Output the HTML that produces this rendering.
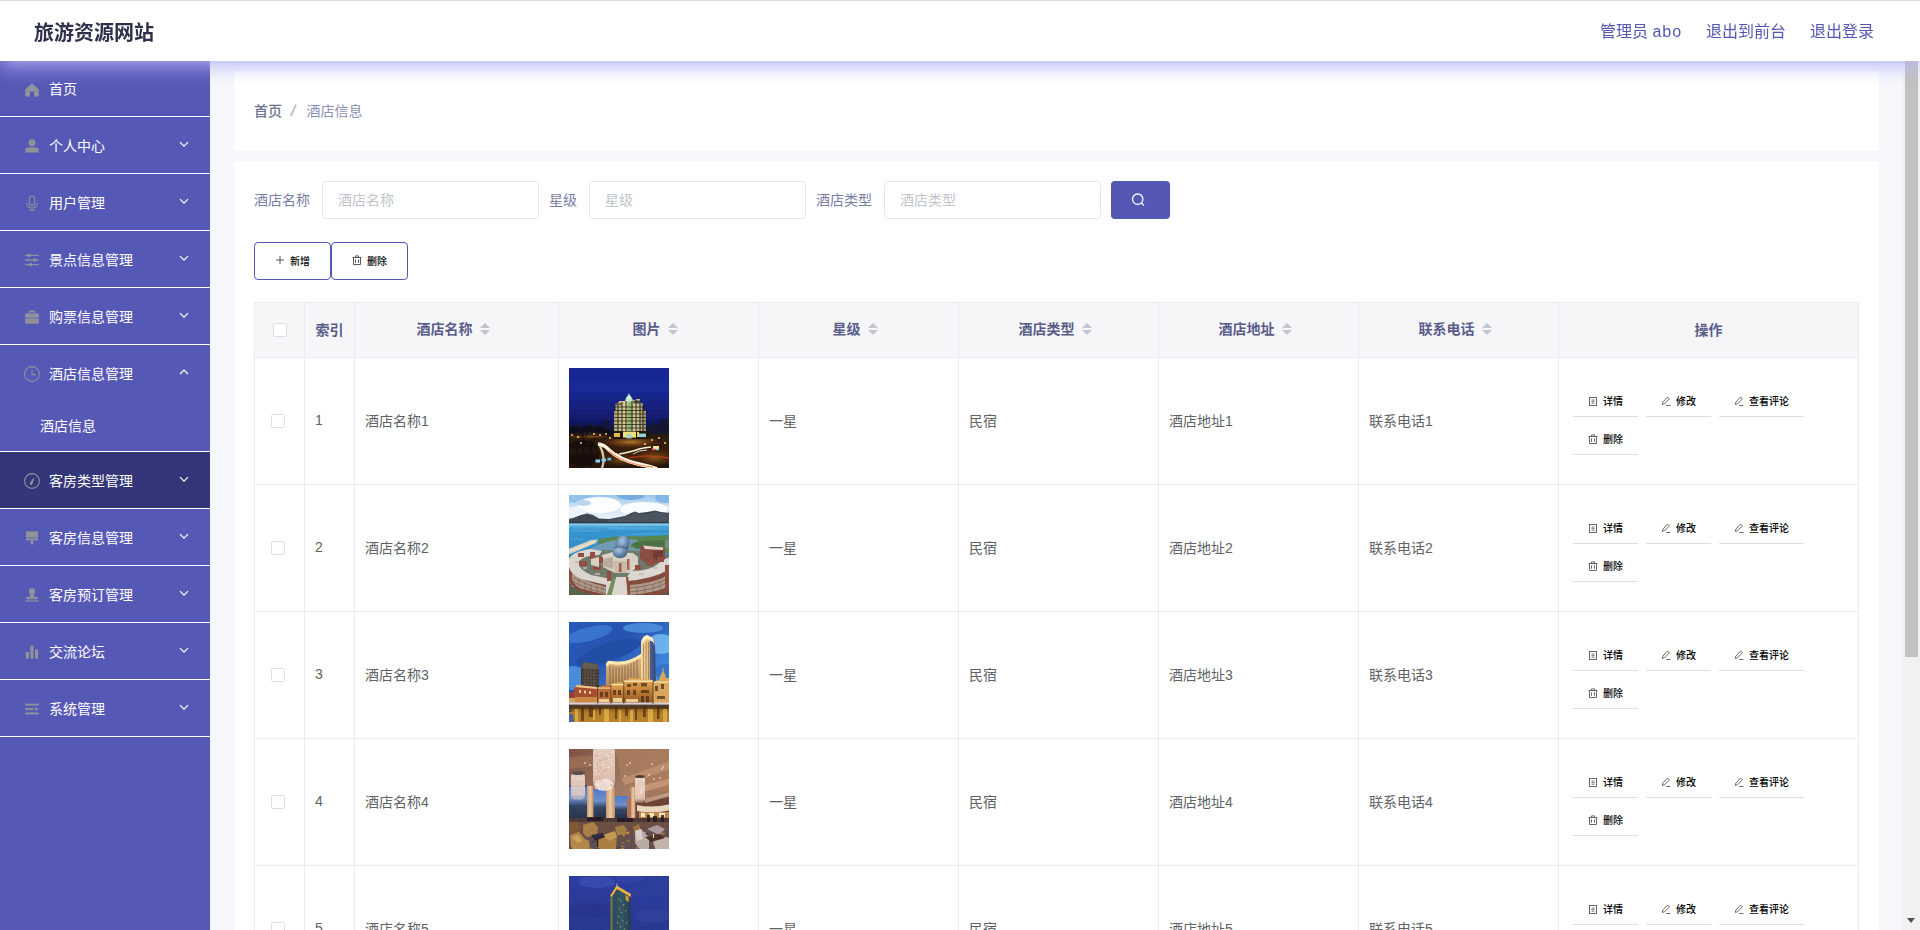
<!DOCTYPE html>
<html lang="zh-CN">
<head>
<meta charset="utf-8">
<title>旅游资源网站</title>
<style>
*{box-sizing:border-box;margin:0;padding:0}
html,body{width:1920px;height:930px;overflow:hidden;background:#f6f7fb;
  font-family:"Liberation Sans","Noto Sans CJK SC",sans-serif;font-size:14px;color:#606266}
ul{list-style:none}
/* ---------- header ---------- */
.navbar{position:fixed;left:0;top:0;width:1920px;height:61px;background:#fff;z-index:30;
  border-top:1px solid #dcdedb;box-shadow:0 4px 20px 0 rgb(181,181,248)}
.navbar .title{position:absolute;left:34px;top:1px;line-height:62px;font-size:20px;font-weight:700;color:#2f3049}
.navbar .right{position:absolute;right:46px;top:0;line-height:62px;font-size:16px;color:#5557b4;white-space:nowrap}
.navbar .right span{margin-left:24px}
.navbar .right em{font-style:normal;letter-spacing:.9px}
/* ---------- scrollbar ---------- */
.sbar{position:fixed;right:0;top:61px;width:17px;height:869px;background:#f1f1f1;z-index:10}
.sbar .thumb{position:absolute;left:2px;top:0;width:13px;height:596px;background:#c1c1c1}
.sbar .arrow{position:absolute;left:4px;bottom:7px;width:0;height:0;border:4.5px solid transparent;border-top:5px solid #505050;border-bottom:0}
/* ---------- sidebar ---------- */
.sidebar{position:fixed;left:0;top:61px;width:210px;height:869px;background:#5658b6;z-index:20;color:#fff}
.menu>li{border-bottom:1px solid #fff}
.menu .item{position:relative;height:56px;line-height:58px;padding-left:49px;font-size:14px;color:#fff;white-space:nowrap}
.menu>li:first-child .item{height:55px;line-height:57px}
.menu .item svg.ic{position:absolute;left:23px;top:50%;margin-top:-8px;width:18px;height:18px;fill:#909399}
.menu .item svg.arr{position:absolute;left:178px;top:50%;margin-top:-7px;width:12px;height:12px;fill:none;stroke:#fff;stroke-width:1.2}
.menu .sub{height:50px;line-height:50px;padding-left:40px;font-size:14px;color:#fff}
.menu li.hover{background:#333678}
/* ---------- main ---------- */
.main{position:absolute;left:210px;top:61px;width:1693px;height:869px;background:#f6f7fb;overflow:hidden}
.card{position:absolute;left:24px;width:1645px;background:#fff}
.crumb{top:10px;height:80px;padding:0 20px;line-height:79px;font-size:14px}
.crumb b{font-weight:500;color:#6b7190}
.crumb i{font-style:normal;display:inline-block;color:#b9bfd2;margin:0 11px 0 9px;font-weight:700;font-size:16px;transform:skewX(-13deg);position:relative;top:-.5px}
.crumb span{color:#8d90b3}
.body{top:100px;height:900px;padding:20px 20px 0}
/* filter */
.filter{height:38px;display:flex;align-items:center;white-space:nowrap}
.filter label{color:#7a7da6;font-size:14px;margin-right:12px;position:relative;top:-1px}
.filter .inp{width:217px;height:38px;border:1px solid #e4e4fc;border-radius:4px;margin-right:10px;
  padding-left:15px;line-height:36px;color:#c0c4cc;font-size:14px;background:#fff}
.filter .search{width:59px;height:38px;border-radius:4px;background:#5557b4;position:relative}
.filter .search svg{position:absolute;left:20px;top:12px;width:14px;height:14px;fill:none;stroke:#fff;stroke-width:1.3}
/* buttons */
.ops{margin-top:23px;height:38px;display:flex}
.btn{height:38px;width:76.8px;padding-bottom:2px;border:1px solid #5557b4;border-radius:4px;background:#fff;margin-right:.4px;
  display:flex;align-items:center;justify-content:center;font-size:10px;color:#000;font-weight:500}
.btn svg{width:10px;height:10px;margin-right:5px;fill:none;stroke:#4a4644;stroke-width:.9}
/* table */
table{border-collapse:separate;border-spacing:0;margin-top:22px;width:1604px;table-layout:fixed;
  border-top:1px solid #e9eaf5;border-left:1px solid #e9eaf5;font-size:14px}
th,td{border-right:1px solid #e9eaf5;border-bottom:1px solid #e9eaf5;padding:0 10px;text-align:left;vertical-align:middle;overflow:hidden}
th{height:55px;background:#f6f6f9;color:#595c89;font-weight:700;text-align:center;white-space:nowrap}
td{height:127px;color:#606266}
td.t{padding-bottom:2px}
th.s{padding-bottom:4px}
th.n{padding-bottom:2px}
.ck{display:block;width:14px;height:14px;border:1px solid #dcdfe6;border-radius:2px;background:#fff}
th .ck{margin-left:8px}
td .ck{margin-left:6px}
.caret{display:inline-block;position:relative;width:24px;height:14px;vertical-align:middle;margin-top:-2px}
.caret:before,.caret:after{content:"";position:absolute;left:7px;border:5px solid transparent}
.caret:before{top:-4px;border-bottom-color:#c0c4cc}
.caret:after{top:8px;border-top-color:#c0c4cc}
.pic{display:block;width:100px;height:100px;position:relative;top:-3px}
.acts{display:flex;flex-wrap:wrap;padding-left:4px;width:260px}
.act{height:32px;margin:2px 8px 4px 0;padding:0 15px;border-bottom:1px solid #dcdfea;display:flex;align-items:center;
  font-size:10px;color:#000;font-weight:500;white-space:nowrap}
.act svg{width:10px;height:10px;margin-right:5px;fill:none;stroke:#5a5552;stroke-width:.9;position:relative;top:.5px}
</style>
</head>
<body>
<header class="navbar">
  <div class="title">旅游资源网站</div>
  <div class="right"><span>管理员 <em>abo</em></span><span>退出到前台</span><span>退出登录</span></div>
</header>
<aside class="sidebar">
  <ul class="menu">
    <li><div class="item"><svg class="ic" viewBox="0 0 18 18"><path d="M9 2.2 L15.8 8.6 V15.6 H11 V10.8 H7 V15.6 H2.2 V8.6 Z"/></svg>首页</div></li>
    <li><div class="item"><svg class="ic" viewBox="0 0 18 18"><circle cx="9" cy="5.8" r="3.5"/><path d="M2.2 15.6 V13.4 Q2.2 10.6 5.6 10.6 H12.4 Q15.8 10.6 15.8 13.4 V15.6 Z"/></svg>个人中心<svg class="arr" viewBox="0 0 12 12"><path d="M2 4.2 L6 8.2 L10 4.2"/></svg></div></li>
    <li><div class="item"><svg class="ic" viewBox="0 0 18 18"><g fill="none" stroke="#909399" stroke-width="1.1"><rect x="6.4" y="2" width="5.2" height="9.4" rx="2.6"/><path d="M3.9 8.4 V9 a5.1 5.1 0 0 0 10.2 0 V8.4"/><path d="M9 14.2 V16.2 M6.3 16.2 H11.7"/></g></svg>用户管理<svg class="arr" viewBox="0 0 12 12"><path d="M2 4.2 L6 8.2 L10 4.2"/></svg></div></li>
    <li><div class="item"><svg class="ic" viewBox="0 0 18 18"><g fill="none" stroke="#909399" stroke-width="1.3"><path d="M2.2 4.4 H15.8 M2.2 9 H15.8 M2.2 13.6 H15.8"/></g><circle cx="6" cy="4.4" r="1.7"/><circle cx="11.6" cy="9" r="1.7"/><circle cx="7.6" cy="13.6" r="1.7"/></svg>景点信息管理<svg class="arr" viewBox="0 0 12 12"><path d="M2 4.2 L6 8.2 L10 4.2"/></svg></div></li>
    <li><div class="item"><svg class="ic" viewBox="0 0 18 18"><path d="M6 5.4 V2.6 H12 V5.4 H10.6 V4 H7.4 V5.4 Z"/><rect x="2.2" y="5.4" width="13.6" height="4.2"/><rect x="2.2" y="10.4" width="13.6" height="5.2"/></svg>购票信息管理<svg class="arr" viewBox="0 0 12 12"><path d="M2 4.2 L6 8.2 L10 4.2"/></svg></div></li>
    <li><div class="item"><svg class="ic" viewBox="0 0 18 18"><g fill="none" stroke="#909399" stroke-width="1.1"><circle cx="9" cy="9" r="7.4"/><path d="M9 4.8 V9.6 H12.8"/></g></svg>酒店信息管理<svg class="arr" viewBox="0 0 12 12"><path d="M2 8 L6 4 L10 8"/></svg></div><div class="sub">酒店信息</div></li>
    <li class="hover"><div class="item"><svg class="ic" viewBox="0 0 18 18"><circle cx="9" cy="9" r="7.4" fill="none" stroke="#909399" stroke-width="1.1"/><path d="M6.9 12.2 Q6.4 10.6 11.4 4.9 Q9.9 12.2 8.6 12.9 Q7.3 13.3 6.9 12.2 Z"/></svg>客房类型管理<svg class="arr" viewBox="0 0 12 12"><path d="M2 4.2 L6 8.2 L10 4.2"/></svg></div></li>
    <li><div class="item"><svg class="ic" viewBox="0 0 18 18"><rect x="3" y="2.4" width="12" height="6.2"/><rect x="3" y="9.4" width="12" height="1.9"/><path d="M7.7 11.3 H10.3 V14.8 Q9 16.6 7.7 14.8 Z"/></svg>客房信息管理<svg class="arr" viewBox="0 0 12 12"><path d="M2 4.2 L6 8.2 L10 4.2"/></svg></div></li>
    <li><div class="item"><svg class="ic" viewBox="0 0 18 18"><circle cx="9" cy="5.4" r="3.1"/><path d="M7.5 7.6 H10.5 L11.2 10.8 H14.6 V13.2 H3.4 V10.8 H6.8 Z"/><rect x="2.2" y="14.4" width="13.6" height="1.2"/></svg>客房预订管理<svg class="arr" viewBox="0 0 12 12"><path d="M2 4.2 L6 8.2 L10 4.2"/></svg></div></li>
    <li><div class="item"><svg class="ic" viewBox="0 0 18 18"><rect x="2.8" y="9" width="3.1" height="6.6"/><rect x="7.4" y="2.6" width="3.1" height="13"/><rect x="12" y="6.4" width="3.1" height="9.2"/></svg>交流论坛<svg class="arr" viewBox="0 0 12 12"><path d="M2 4.2 L6 8.2 L10 4.2"/></svg></div></li>
    <li><div class="item"><svg class="ic" viewBox="0 0 18 18"><rect x="2.2" y="3.6" width="13.6" height="1.9"/><rect x="2.2" y="8.05" width="8.6" height="1.9"/><rect x="2.2" y="12.5" width="13.6" height="1.9"/><path d="M12.2 6.7 L15.8 9 L12.2 11.3 Z"/></svg>系统管理<svg class="arr" viewBox="0 0 12 12"><path d="M2 4.2 L6 8.2 L10 4.2"/></svg></div></li>
  </ul>
</aside>
<main class="main">
  <section class="card crumb"><b>首页</b><i>/</i><span>酒店信息</span></section>
  <section class="card body">
    <div class="filter"><label>酒店名称</label><div class="inp">酒店名称</div><label>星级</label><div class="inp">星级</div><label>酒店类型</label><div class="inp">酒店类型</div><div class="search"><svg viewBox="0 0 14 14"><circle cx="6.7" cy="6.2" r="5.2"/><path d="M10.5 10 L13 12.6"/></svg></div></div>
    <div class="ops"><div class="btn"><svg viewBox="0 0 10 10"><path d="M5 1 V9 M1 5 H9"/></svg>新增</div><div class="btn"><svg viewBox="0 0 10 10"><path d="M0.6 2.5 H9.4 M3.5 2.5 V0.9 H6.5 V2.5 M1.5 2.5 V9.5 H8.5 V2.5"/><path d="M3.5 4.4 V7.8 M6.5 4.4 V7.8" stroke-width=".9"/></svg>删除</div></div>
    <table>
      <colgroup><col style="width:50px"><col style="width:50px"><col style="width:204px"><col style="width:200px"><col style="width:200px"><col style="width:200px"><col style="width:200px"><col style="width:200px"><col style="width:300px"></colgroup>
      <tr><th><span class="ck"></span></th><th class="n">索引</th><th class="s">酒店名称<span class="caret"></span></th><th class="s">图片<span class="caret"></span></th><th class="s">星级<span class="caret"></span></th><th class="s">酒店类型<span class="caret"></span></th><th class="s">酒店地址<span class="caret"></span></th><th class="s">联系电话<span class="caret"></span></th><th class="n">操作</th></tr>
      <tr><td><span class="ck"></span></td><td class="t">1</td><td class="t">酒店名称1</td><td><svg class="pic" viewBox="0 0 100 100"><defs><filter id="bl1" x="-10%" y="-10%" width="120%" height="120%"><feGaussianBlur stdDeviation="0.5"/></filter><linearGradient id="p1s" x1="0" y1="0" x2="0" y2="1"><stop offset="0" stop-color="#15228f"/><stop offset=".35" stop-color="#1a2b98"/><stop offset=".75" stop-color="#121b6e"/><stop offset="1" stop-color="#0b1040"/></linearGradient><linearGradient id="p1g" x1="0" y1="0" x2="0" y2="1"><stop offset="0" stop-color="#241810"/><stop offset=".5" stop-color="#3a200a"/><stop offset="1" stop-color="#160e08"/></linearGradient><radialGradient id="p1o" cx=".5" cy=".5" r=".5"><stop offset="0" stop-color="#ffb040" stop-opacity=".9"/><stop offset="1" stop-color="#c05010" stop-opacity="0"/></radialGradient><linearGradient id="p1b" x1="0" y1="0" x2="1" y2="0"><stop offset="0" stop-color="#b0a478"/><stop offset=".35" stop-color="#e0d29c"/><stop offset=".5" stop-color="#86b468"/><stop offset=".65" stop-color="#dccf9a"/><stop offset="1" stop-color="#9c9268"/></linearGradient></defs><g filter="url(#bl1)"><rect x="-6" y="-6" width="112" height="74" fill="url(#p1s)"/><rect x="-6" y="62" width="112" height="44" fill="url(#p1g)"/><path d="M-6 64 V58 H4 L8 55 L12 58 H18 L21 53 L24 58 H26 V56 H31 V60 H34 V54 L37 51 L40 54 V57 H44 V66 H-6 Z" fill="#161738"/><path d="M78 66 V58 H83 V55 H89 V57 H92 V51 H101 V66 Z" fill="#14152f"/><ellipse cx="20" cy="67" rx="26" ry="4" fill="url(#p1o)" opacity=".8"/><ellipse cx="62" cy="74" rx="30" ry="6" fill="url(#p1o)" opacity=".7"/><ellipse cx="85" cy="90" rx="22" ry="9" fill="url(#p1o)" opacity=".45"/><ellipse cx="52" cy="92" rx="20" ry="7" fill="url(#p1o)" opacity=".35"/><path d="M45 63 V44 L46.5 42 V36 L50 34 V33 H56 L57 30 Q60 24 63 30 L64 32 H66 L68 31 H71 V34 L74 36 V42 L77 43 V63 Z" fill="url(#p1b)"/><path d="M57.3 30 Q60 24.5 62.7 30 V33.5 H57.3 Z" fill="#bfeedd"/><rect x="59.6" y="25.5" width=".9" height="3" fill="#e8fff4"/><g stroke="#2e2a1c" stroke-width="1.15" opacity=".8"><path d="M45 39 H77 M45 42.5 H77 M45 46 H77 M45 49.5 H77 M45 53 H77 M45 56.5 H77 M45 60 H77"/></g><g stroke="#24221a" stroke-width="1.2" opacity=".8"><path d="M49 36 V63 M53 34 V63 M57 33 V63 M63 33 V63 M67 32 V63 M71 34 V63 M74 37 V63"/></g><rect x="64.5" y="32.5" width="7" height="3" fill="#2a2a30" opacity=".8"/><rect x="47" y="35" width="6" height="2.2" fill="#3a3828" opacity=".6"/><rect x="44" y="63" width="36" height="8" fill="#1c140c"/><rect x="54" y="63.6" width="13" height="6" fill="#f3e07a"/><rect x="57.5" y="66" width="5" height="4.5" fill="#9fd8c8"/><rect x="45" y="65" width="6" height="4" fill="#e8b850"/><rect x="70" y="65.5" width="7" height="3.6" fill="#8fd0d8"/><rect x="68" y="64" width="2" height="5" fill="#f0d060"/><path d="M14 98 V62 M16 74 L11 64 M16 70 L21 60 M22 100 V72 M22 80 L26 70 M8 100 V78" stroke="#120c0a" stroke-width="1.1" fill="none" opacity=".85"/><ellipse cx="13" cy="85" rx="18" ry="13" fill="#0c0808" opacity=".55"/><path d="M-6 62 Q6 56 12 60 Q18 54 24 60 Q30 56 36 61 L44 63 V68 H-6 Z" fill="#0e0c14" opacity=".7"/><circle cx="3" cy="67" r="1" fill="#ffd070"/><circle cx="9" cy="69" r="1" fill="#ffd070"/><circle cx="25" cy="66" r="1" fill="#ffd070"/><circle cx="31" cy="67" r="1" fill="#ffd070"/><circle cx="37" cy="66" r="1" fill="#ffd070"/><circle cx="41" cy="70" r="1" fill="#ffd070"/><circle cx="83" cy="72" r="1" fill="#ffd070"/><circle cx="90" cy="70" r="1" fill="#ffd070"/><circle cx="96" cy="75" r="1" fill="#ffd070"/><circle cx="76" cy="76" r="1" fill="#ffd070"/><circle cx="12" cy="75" r="1" fill="#ffd070"/><path d="M29 76 Q36 77 40 82 Q50 92 70 96 Q80 98 88 101" stroke="#fff6e0" stroke-width="3.6" fill="none"/><path d="M46 86 Q58 95 78 98" stroke="#ffffff" stroke-width="3" fill="none" opacity=".9"/><path d="M31 78 Q37 90 33 100" stroke="#ffe8c0" stroke-width="2.2" fill="none" opacity=".85"/><path d="M50 86 Q62 84 70 81 Q76 79.5 82 79" stroke="#fff0d0" stroke-width="1.6" fill="none"/><path d="M64 86 Q70 82 78 82" stroke="#ffffff" stroke-width="1" fill="none" opacity=".8"/><path d="M40 83 Q54 96 84 99" stroke="#ff7030" stroke-width="1.4" fill="none" opacity=".7"/><path d="M60 90 Q76 86 100 90" stroke="#e04020" stroke-width="1.6" fill="none" opacity=".6"/><rect x="26.5" y="91.5" width="4.5" height="3" fill="#8fd6ff"/><rect x="32.5" y="90.5" width="4.5" height="3" fill="#7fd0ff"/><rect x="38.5" y="89.8" width="3.5" height="2.6" fill="#6fb8f0"/><rect x="84" y="78" width="6" height="3.4" fill="#ffe0a0"/><rect x="83" y="80.5" width="3" height="1.6" fill="#ff60a0"/><rect x="87" y="80.8" width="3" height="1.4" fill="#60e0d0"/></g></svg></td><td class="t">一星</td><td class="t">民宿</td><td class="t">酒店地址1</td><td class="t">联系电话1</td><td><div class="acts"><span class="act"><svg viewBox="0 0 10 10"><rect x="1.5" y="1.5" width="7" height="8"/><path d="M3.5 4 H6.5 M3.5 5.6 H6.5 M3.5 7.2 H6.5" stroke-width=".8"/></svg>详情</span><span class="act"><svg viewBox="0 0 10 10"><path d="M6.6 1 L8.4 2.8 L3.4 7.9 L1.3 8.4 L1.8 6.2 Z M5.2 9.5 H9.4"/></svg>修改</span><span class="act"><svg viewBox="0 0 10 10"><path d="M6.6 1 L8.4 2.8 L3.4 7.9 L1.3 8.4 L1.8 6.2 Z M5.2 9.5 H9.4"/></svg>查看评论</span><span class="act"><svg viewBox="0 0 10 10"><path d="M0.6 2.5 H9.4 M3.5 2.5 V0.9 H6.5 V2.5 M1.5 2.5 V9.5 H8.5 V2.5"/><path d="M3.5 4.4 V7.8 M6.5 4.4 V7.8" stroke-width=".9"/></svg>删除</span></div></td></tr>
      <tr><td><span class="ck"></span></td><td class="t">2</td><td class="t">酒店名称2</td><td><svg class="pic" viewBox="0 0 100 100"><defs><filter id="bl2" x="-10%" y="-10%" width="120%" height="120%"><feGaussianBlur stdDeviation="0.5"/></filter><filter id="gr2" x="0" y="0" width="100%" height="100%"><feTurbulence type="fractalNoise" baseFrequency=".55" numOctaves="3" seed="5"/><feColorMatrix type="matrix" values="0 0 0 0 .95  0 0 0 0 .95  0 0 0 0 .95  .9 .9 .9 0 -.95"/></filter><filter id="gd2" x="0" y="0" width="100%" height="100%"><feTurbulence type="fractalNoise" baseFrequency=".45" numOctaves="3" seed="13"/><feColorMatrix type="matrix" values="0 0 0 0 0  0 0 0 0 0  0 0 0 0 0  -.9 -.9 -.9 0 1.05"/></filter><linearGradient id="p2s" x1="0" y1="0" x2="0" y2="1"><stop offset="0" stop-color="#7fb6e6"/><stop offset=".5" stop-color="#cfe3f4"/><stop offset="1" stop-color="#f4f8fb"/></linearGradient><linearGradient id="p2w" x1="0" y1="0" x2="0" y2="1"><stop offset="0" stop-color="#58b4e0"/><stop offset=".25" stop-color="#2f93d0"/><stop offset="1" stop-color="#2a84c4"/></linearGradient><radialGradient id="p2d" cx=".4" cy=".35" r=".7"><stop offset="0" stop-color="#a9c4e0"/><stop offset=".6" stop-color="#5d7fa8"/><stop offset="1" stop-color="#3a5578"/></radialGradient></defs><g filter="url(#bl2)"><rect x="-6" y="-6" width="112" height="36" fill="url(#p2s)"/><ellipse cx="8" cy="2" rx="16" ry="6" fill="#8ec0ea"/><ellipse cx="62" cy="0" rx="14" ry="5" fill="#6fa9e2"/><ellipse cx="96" cy="3" rx="10" ry="5" fill="#7db4e6"/><ellipse cx="30" cy="10" rx="22" ry="8" fill="#ffffff" opacity=".95"/><ellipse cx="75" cy="14" rx="24" ry="7" fill="#ffffff" opacity=".9"/><ellipse cx="5" cy="17" rx="12" ry="5" fill="#eef4fa"/><ellipse cx="14" cy="8" rx="8" ry="3" fill="#b8d6f0"/><path d="M-6 25 L4 23 L12 20 L18 18.5 L24 20 L30 23.5 L40 24 L48 22.5 L56 21 L62 18 L66 16.5 L70 18 L78 17 L86 15.5 L92 17 L101 18 V30 H-6 Z" fill="#38424e"/><path d="M40 25 L56 22 L66 18 L78 19 L90 17 L101 20 V28 H40 Z" fill="#4a5560" opacity=".7"/><rect x="-6" y="27" width="112" height="1.6" fill="#2b3238"/><rect x="-6" y="28.5" width="112" height="34" fill="url(#p2w)"/><rect x="-6" y="28.5" width="112" height="2" fill="#8fd0ee" opacity=".7"/><path d="M30 44 Q50 40 72 41.5 L101 40 V58 H28 Z" fill="#55824a"/><path d="M62 48 Q80 44 101 46 V52 Q80 52 66 53 Z" fill="#456e3c"/><path d="M20 54 Q34 46 52 44.5 Q66 43.5 70 45.5 Q62 48 61 52 Q70 55 80 56 L80 62 H20 Z" fill="#6a98b4"/><path d="M-6 56 L22 45 L29 44.5 L27 48 L-6 62 Z" fill="#d9cdb6"/><path d="M-6 58.5 L26 46.5" stroke="#f1eadb" stroke-width="1" fill="none"/><path d="M-6 64 Q20 54 50 55 Q80 55 106 62 V106 H-6 Z" fill="#6b7566"/><path d="M-6 84 Q10 96 40 100 V106 H-6 Z" fill="#4f5f44"/><path d="M106 84 Q90 96 60 100 V106 H106 Z" fill="#56683f"/><path d="M71 52 L76 50 L96 53 L96 66 L80 70 L71 64 Z" fill="#85463a"/><path d="M74 50.5 L94 52.5 L94 55 L76 54 Z" fill="#dcd2c8"/><rect x="84" y="56" width="10" height="8" fill="#6a352c"/><rect x="96" y="45" width="8" height="8" fill="#8c8c8c" opacity=".8"/><path d="M33 60 L44 57 L64 58 L69 62 L69 72 L60 78 L46 78 L34 72 Z" fill="#d7cfc4"/><path d="M34 64 L44 62 V74 L34 71 Z" fill="#b8a898"/><path d="M44 66 H58 V78 H46 Z" fill="#c9b8a6"/><rect x="50" y="68" width="2.5" height="9" fill="#a0523c"/><rect x="58" y="64" width="2.5" height="11" fill="#a8604a"/><ellipse cx="53.5" cy="49" rx="7" ry="9" fill="url(#p2d)" transform="rotate(18 53.5 49)"/><ellipse cx="51" cy="57" rx="7.5" ry="6.2" fill="url(#p2d)"/><path d="M45 53 Q52 50 59 54" stroke="#2f4666" stroke-width="1" fill="none" opacity=".7"/><path d="M0 64 Q4 56 22 54 L33 56 L30 60 Q16 60 10 66 Q8 74 22 80 L42 84 L42 90 L37 103 L4 92 L-2 82 Z" fill="#d9d4cd"/><path d="M0 72 Q2 80 12 84 L37 90 V103 L10 96 Q0 90 -2 80 Z" fill="#7f4436"/><path d="M3 78 Q8 84 37 92 V100 L10 93 Q4 88 3 84 Z" fill="#b5ab9a" opacity=".8"/><g fill="#8d4a3a"><rect x="9" y="58" width="6" height="4"/><rect x="21" y="57" width="5" height="7"/><rect x="10" y="66" width="8" height="5"/><rect x="24" y="70" width="8" height="5"/><rect x="38" y="76" width="4" height="10"/><rect x="30" y="62" width="4" height="6"/></g><path d="M22 64 L30 62 V72 L22 70 Z" fill="#d8cec0"/><path d="M58 82 L62 76 Q84 76 92 66 L101 62 V96 L60 104 Z" fill="#dbd6cf"/><path d="M58 86 Q84 84 101 74 V98 L60 106 Z" fill="#7f4436"/><path d="M61 90 Q86 88 99 80 V92 Q84 98 61 100 Z" fill="#b5ab9a" opacity=".8"/><g fill="#8d4a3a"><rect x="66" y="70" width="6" height="5"/><rect x="78" y="66" width="7" height="5"/><rect x="89" y="62" width="6" height="5"/><rect x="56" y="82" width="3.5" height="18"/><rect x="96" y="70" width="4" height="24"/></g><path d="M47 82 L57 82 L59 106 H41 Z" fill="#d9d4cc"/><path d="M43 84 L47 82 L41 106 H36 Z" fill="#6f8a54"/><g stroke="#6a3a30" stroke-width=".7" opacity=".75" fill="none"><path d="M4 82 Q9 87 37 95 M4 86 Q9 91 37 99"/><path d="M61 93 Q86 91 99 83 M61 97 Q86 95 99 87"/></g><g stroke="#5a3028" stroke-width=".6" opacity=".6"><path d="M10 84 V94 M16 87 V97 M22 89 V99 M28 91 V101 M33 92 V102 M68 92 V100 M76 91 V99 M84 89 V97 M91 86 V94"/></g><g fill="#bfb6aa" opacity=".8"><rect x="6" y="66" width="3" height="2"/><rect x="14" y="72" width="4" height="2"/><rect x="26" y="78" width="5" height="2"/><rect x="70" y="78" width="5" height="2"/><rect x="84" y="72" width="4" height="2"/></g><path d="M-6 96 Q10 104 30 106 H-6 Z" fill="#3c4a34"/><path d="M106 94 Q92 102 70 106 H106 Z" fill="#465a38"/><g stroke="#2a6fae" stroke-width=".6" opacity=".45"><path d="M-4 34 H40 M10 38 H70 M-4 42 H26 M30 36 H100 M50 32 H104 M-4 47 H18"/></g><g stroke="#8fd2f0" stroke-width=".5" opacity=".5"><path d="M4 36 H30 M40 33 H90 M-4 44 H14 M60 39 H100"/></g></g><rect width="100" height="100" filter="url(#gr2)" opacity="0.09"/><rect width="100" height="100" filter="url(#gd2)" opacity="0.09"/></svg></td><td class="t">一星</td><td class="t">民宿</td><td class="t">酒店地址2</td><td class="t">联系电话2</td><td><div class="acts"><span class="act"><svg viewBox="0 0 10 10"><rect x="1.5" y="1.5" width="7" height="8"/><path d="M3.5 4 H6.5 M3.5 5.6 H6.5 M3.5 7.2 H6.5" stroke-width=".8"/></svg>详情</span><span class="act"><svg viewBox="0 0 10 10"><path d="M6.6 1 L8.4 2.8 L3.4 7.9 L1.3 8.4 L1.8 6.2 Z M5.2 9.5 H9.4"/></svg>修改</span><span class="act"><svg viewBox="0 0 10 10"><path d="M6.6 1 L8.4 2.8 L3.4 7.9 L1.3 8.4 L1.8 6.2 Z M5.2 9.5 H9.4"/></svg>查看评论</span><span class="act"><svg viewBox="0 0 10 10"><path d="M0.6 2.5 H9.4 M3.5 2.5 V0.9 H6.5 V2.5 M1.5 2.5 V9.5 H8.5 V2.5"/><path d="M3.5 4.4 V7.8 M6.5 4.4 V7.8" stroke-width=".9"/></svg>删除</span></div></td></tr>
      <tr><td><span class="ck"></span></td><td class="t">3</td><td class="t">酒店名称3</td><td><svg class="pic" viewBox="0 0 100 100"><defs><filter id="bl3" x="-10%" y="-10%" width="120%" height="120%"><feGaussianBlur stdDeviation="0.5"/></filter><filter id="gr3" x="0" y="0" width="100%" height="100%"><feTurbulence type="fractalNoise" baseFrequency=".55" numOctaves="3" seed="6"/><feColorMatrix type="matrix" values="0 0 0 0 .95  0 0 0 0 .95  0 0 0 0 .95  .9 .9 .9 0 -.95"/></filter><filter id="gd3" x="0" y="0" width="100%" height="100%"><feTurbulence type="fractalNoise" baseFrequency=".45" numOctaves="3" seed="14"/><feColorMatrix type="matrix" values="0 0 0 0 0  0 0 0 0 0  0 0 0 0 0  -.9 -.9 -.9 0 1.05"/></filter><linearGradient id="p3s" x1="0" y1="0" x2="1" y2="1"><stop offset="0" stop-color="#2454b8"/><stop offset=".4" stop-color="#2250b0"/><stop offset=".7" stop-color="#3a86dc"/><stop offset="1" stop-color="#62b8f4"/></linearGradient><linearGradient id="p3t" x1="0" y1="0" x2="1" y2="0"><stop offset="0" stop-color="#f6d89a"/><stop offset=".55" stop-color="#e2ba7c"/><stop offset=".62" stop-color="#4a5a8a"/><stop offset="1" stop-color="#2f447a"/></linearGradient><linearGradient id="p3c" x1="0" y1="0" x2="0" y2="1"><stop offset="0" stop-color="#f8dc9c"/><stop offset=".2" stop-color="#d9b27c"/><stop offset="1" stop-color="#b98a58"/></linearGradient><linearGradient id="p3l" x1="0" y1="0" x2="0" y2="1"><stop offset="0" stop-color="#e8b058"/><stop offset=".5" stop-color="#c07c30"/><stop offset="1" stop-color="#8a5020"/></linearGradient><linearGradient id="p3r" x1="0" y1="0" x2="0" y2="1"><stop offset="0" stop-color="#6a4214"/><stop offset=".3" stop-color="#b07a22"/><stop offset="1" stop-color="#b8862c"/></linearGradient></defs><g filter="url(#bl3)"><rect x="-6" y="-6" width="112" height="100" fill="url(#p3s)"/><ellipse cx="40" cy="30" rx="34" ry="9" fill="#1b459c" opacity=".7" transform="rotate(-18 40 30)"/><ellipse cx="20" cy="12" rx="24" ry="7" fill="#3f86dc" opacity=".6" transform="rotate(-14 20 12)"/><ellipse cx="92" cy="22" rx="14" ry="10" fill="#7cc4f4" opacity=".75"/><ellipse cx="96" cy="50" rx="10" ry="8" fill="#2a60b8" opacity=".6"/><ellipse cx="74" cy="6" rx="20" ry="5" fill="#5aa6ec" opacity=".6"/><ellipse cx="4" cy="56" rx="14" ry="12" fill="#4f98e4" opacity=".8"/><path d="M72 62 V22 Q72 15 78 13 L84 16 L86 22 L87 62 Z" fill="url(#p3t)"/><path d="M72 24 Q72 15 78 13 L84 16 L86 24 L84 20 L78 17 L74 20 Z" fill="#fff0c0"/><g stroke="#6a4a30" stroke-width=".7" opacity=".7"><path d="M74.5 22 V60 M77 20 V60 M79.5 20 V60"/></g><path d="M37 64 V42 Q38 38 42 39 Q58 42 72 32 V64 Z" fill="url(#p3c)"/><path d="M37 43 Q38 38 42 39 Q58 42 72 32 V35 Q58 45 42 42 Q39 41.5 38.5 45 Z" fill="#ffe8b0"/><g stroke="#5a3c28" stroke-width=".8" opacity=".75"><path d="M41 44 V62 M44 44.5 V62 M47 45 V62 M50 45 V62 M53 44.5 V62 M56 44 V62 M59 43 V62 M62 41.5 V62 M65 40 V62 M68 38 V62"/></g><path d="M12 66 V46 L15 40 L28 42 L30 47 V68 Z" fill="#3b322c"/><g stroke="#a89a80" stroke-width=".5" opacity=".55"><path d="M13 47 H30 M13 50 H30 M13 53 H30 M13 56 H30 M13 59 H30 M13 62 H30 M16 41 V66 M19 41 V66 M22 41.5 V66 M25 42 V66"/></g><path d="M15 40 L28 42 L30 47 L12 46 Z" fill="#6a6050" opacity=".8"/><path d="M84 82 V60 L90 58 L92 52 L94 49 L96 52 L97 56 L101 56 V82 Z" fill="#d8a458"/><rect x="93.6" y="46" width=".9" height="4" fill="#d8b070"/><path d="M5 82 V66 L8 63 L28 65 V82 Z" fill="#a34a2e"/><path d="M6 65 L8 63 L28 65 V67 Z" fill="#f0c880"/><rect x="6" y="75" width="22" height="7" fill="#c8843c"/><path d="M28 82 V66 L34 63 L42 64 V82 Z" fill="#b86830"/><path d="M42 82 V62 L52 60 L56 62 V82 Z" fill="url(#p3l)"/><path d="M54 82 V60 L62 56 L84 58 V82 Z" fill="url(#p3l)"/><g fill="#4a2a14" opacity=".75"><rect x="58" y="62" width="4" height="3"/><rect x="64" y="61" width="4" height="3"/><rect x="72" y="61" width="6" height="3.4"/><rect x="58" y="68" width="3" height="5"/><rect x="64" y="68" width="3" height="5"/><rect x="72" y="68" width="8" height="3"/><rect x="72" y="74" width="3" height="7"/><rect x="77" y="74" width="3" height="7"/><rect x="86" y="64" width="3" height="5"/><rect x="92" y="62" width="3" height="5"/><rect x="88" y="74" width="8" height="3"/><rect x="44" y="68" width="3" height="5"/><rect x="49" y="68" width="3" height="5"/><rect x="31" y="70" width="3" height="5"/><rect x="36" y="70" width="3" height="5"/></g><g fill="#ffe9a8" opacity=".8"><rect x="10" y="68" width="2" height="3"/><rect x="15" y="68.5" width="2" height="3"/><rect x="20" y="69" width="2" height="3"/><rect x="30" y="77" width="10" height="3"/><rect x="44" y="76" width="9" height="4"/><rect x="57" y="77" width="12" height="3"/></g><rect x="-6" y="70" width="11" height="12" fill="#8a4030"/><rect x="-6" y="76" width="12" height="6" fill="#d0a060"/><rect x="-6" y="80.5" width="112" height="2.6" fill="#d8d0d8"/><rect x="-6" y="82.6" width="112" height="1.4" fill="#4a3a30"/><rect x="-6" y="84" width="112" height="22" fill="url(#p3r)"/><g fill="#4a2a0c" opacity=".7"><rect x="12" y="85" width="3" height="14"/><rect x="20" y="85" width="4" height="10"/><rect x="46" y="85" width="2" height="12"/><rect x="56" y="85" width="3" height="9"/><rect x="66" y="85" width="2" height="13"/><rect x="74" y="85" width="3" height="10"/><rect x="88" y="85" width="2.5" height="12"/><rect x="30" y="85" width="2" height="8"/></g><g fill="#ffd060" opacity=".5"><rect x="6" y="87" width="3" height="15"/><rect x="35" y="87" width="5" height="13"/><rect x="61" y="88" width="3" height="12"/><rect x="79" y="87" width="5" height="13"/><rect x="94" y="87" width="4" height="13"/><rect x="24" y="88" width="2" height="10"/><rect x="50" y="88" width="2" height="12"/></g><path d="M-6 92 H4 L6 106 H-6 Z" fill="#2a5aa8" opacity=".8"/><rect x="-6" y="84" width="9" height="6" fill="#3a3a50" opacity=".7"/><g fill="#fff2c0" opacity=".85"><rect x="55" y="58.5" width="29" height="1.4"/><rect x="42.5" y="62" width="13" height="1.2"/><rect x="29" y="65.5" width="13" height="1.1"/><rect x="85" y="59.5" width="16" height="1.2"/></g><g fill="#2a1a10" opacity=".45"><rect x="28" y="66" width="1.2" height="16"/><rect x="41.4" y="63" width="1.2" height="19"/><rect x="54" y="60" width="1.4" height="22"/><rect x="83.4" y="59" width="1.4" height="23"/></g><rect x="-6" y="84" width="112" height="3" fill="#3a2410" opacity=".55"/></g><rect width="100" height="100" filter="url(#gr3)" opacity="0.06"/><rect width="100" height="100" filter="url(#gd3)" opacity="0.06"/></svg></td><td class="t">一星</td><td class="t">民宿</td><td class="t">酒店地址3</td><td class="t">联系电话3</td><td><div class="acts"><span class="act"><svg viewBox="0 0 10 10"><rect x="1.5" y="1.5" width="7" height="8"/><path d="M3.5 4 H6.5 M3.5 5.6 H6.5 M3.5 7.2 H6.5" stroke-width=".8"/></svg>详情</span><span class="act"><svg viewBox="0 0 10 10"><path d="M6.6 1 L8.4 2.8 L3.4 7.9 L1.3 8.4 L1.8 6.2 Z M5.2 9.5 H9.4"/></svg>修改</span><span class="act"><svg viewBox="0 0 10 10"><path d="M6.6 1 L8.4 2.8 L3.4 7.9 L1.3 8.4 L1.8 6.2 Z M5.2 9.5 H9.4"/></svg>查看评论</span><span class="act"><svg viewBox="0 0 10 10"><path d="M0.6 2.5 H9.4 M3.5 2.5 V0.9 H6.5 V2.5 M1.5 2.5 V9.5 H8.5 V2.5"/><path d="M3.5 4.4 V7.8 M6.5 4.4 V7.8" stroke-width=".9"/></svg>删除</span></div></td></tr>
      <tr><td><span class="ck"></span></td><td class="t">4</td><td class="t">酒店名称4</td><td><svg class="pic" viewBox="0 0 100 100"><defs><filter id="bl4" x="-10%" y="-10%" width="120%" height="120%"><feGaussianBlur stdDeviation="0.5"/></filter><filter id="gr4" x="0" y="0" width="100%" height="100%"><feTurbulence type="fractalNoise" baseFrequency=".55" numOctaves="3" seed="7"/><feColorMatrix type="matrix" values="0 0 0 0 .95  0 0 0 0 .95  0 0 0 0 .95  .9 .9 .9 0 -.95"/></filter><filter id="gd4" x="0" y="0" width="100%" height="100%"><feTurbulence type="fractalNoise" baseFrequency=".45" numOctaves="3" seed="15"/><feColorMatrix type="matrix" values="0 0 0 0 0  0 0 0 0 0  0 0 0 0 0  -.9 -.9 -.9 0 1.05"/></filter><linearGradient id="p4c" x1="0" y1="0" x2="1" y2="1"><stop offset="0" stop-color="#74483a"/><stop offset=".5" stop-color="#a27860"/><stop offset="1" stop-color="#946650"/></linearGradient><linearGradient id="p4w" x1="0" y1="0" x2="0" y2="1"><stop offset="0" stop-color="#4a74c8"/><stop offset=".4" stop-color="#6a8ccc"/><stop offset=".62" stop-color="#2c3e5c"/><stop offset="1" stop-color="#222e48"/></linearGradient><linearGradient id="p4p" x1="0" y1="0" x2="1" y2="0"><stop offset="0" stop-color="#c89870"/><stop offset=".5" stop-color="#ecc8a0"/><stop offset="1" stop-color="#b88860"/></linearGradient><linearGradient id="p4h" x1="0" y1="0" x2="0" y2="1"><stop offset="0" stop-color="#f4e0d8" stop-opacity=".85"/><stop offset=".8" stop-color="#f0d0c0" stop-opacity=".8"/><stop offset="1" stop-color="#e8c0a8" stop-opacity=".3"/></linearGradient><linearGradient id="p4f" x1="0" y1="0" x2="0" y2="1"><stop offset="0" stop-color="#6a4a3a"/><stop offset="1" stop-color="#5a4a50"/></linearGradient></defs><g filter="url(#bl4)"><rect x="-6" y="-6" width="112" height="112" fill="url(#p4c)"/><path d="M44 -6 L106 -6 V46 Q80 36 56 40 Z" fill="#a87858" opacity=".8"/><path d="M52 30 L106 10 V18 L56 36 Z" fill="#c89878" opacity=".6"/><path d="M60 40 L106 28 V34 L64 46 Z" fill="#d8a884" opacity=".55"/><path d="M-6 10 Q20 4 44 10 V22 Q20 14 -6 22 Z" fill="#a47458" opacity=".6"/><rect x="-6" y="36" width="24" height="34" fill="url(#p4w)"/><rect x="24" y="40" width="14" height="30" fill="url(#p4w)"/><rect x="46" y="47" width="13" height="22" fill="url(#p4w)"/><rect x="-6" y="36" width="24" height="2" fill="#2a2a40" opacity=".5"/><path d="M66 52 L106 46 V72 H66 Z" fill="#6a3c30"/><path d="M68 56 Q84 60 106 54 V60 Q84 66 68 62 Z" fill="#e8d4bc"/><path d="M76 50 L106 42 V46 L76 54 Z" fill="#caa888" opacity=".8"/><rect x="70" y="63" width="36" height="9" fill="#b8804c"/><g fill="#ffe6b0"><rect x="72" y="64" width="4" height="4"/><rect x="80" y="64" width="5" height="4"/><rect x="90" y="64" width="6" height="4"/></g><rect x="58" y="50" width="5" height="18" fill="#b06a50"/><rect x="18" y="37" width="6.5" height="34" fill="url(#p4p)"/><rect x="37" y="38" width="9" height="40" fill="url(#p4p)"/><rect x="62" y="38" width="4.5" height="32" fill="url(#p4p)"/><rect x="36" y="72" width="11" height="6" fill="#d8a868"/><rect x="24" y="-6" width="22" height="46" rx="8" fill="url(#p4h)"/><ellipse cx="35" cy="36" rx="10" ry="6" fill="#f8e8e0" opacity=".8"/><rect x="2" y="23" width="14" height="28" rx="5" fill="url(#p4h)"/><ellipse cx="9" cy="24" rx="7" ry="2" fill="#5a4a48"/><rect x="66" y="27" width="10" height="27" rx="4" fill="url(#p4h)"/><ellipse cx="71" cy="27.5" rx="5" ry="1.6" fill="#4a3a38"/><circle cx="16" cy="14" r=".8" fill="#fff4e8"/><circle cx="21" cy="16" r=".8" fill="#fff4e8"/><circle cx="58" cy="16" r=".8" fill="#fff4e8"/><circle cx="61" cy="14" r=".8" fill="#fff4e8"/><circle cx="56" cy="27" r=".8" fill="#fff4e8"/><circle cx="83" cy="15" r=".8" fill="#fff4e8"/><circle cx="94" cy="18" r=".8" fill="#fff4e8"/><circle cx="93" cy="20" r=".8" fill="#fff4e8"/><circle cx="85" cy="30" r=".8" fill="#fff4e8"/><circle cx="91" cy="29" r=".8" fill="#fff4e8"/><circle cx="80" cy="26" r=".8" fill="#fff4e8"/><rect x="34.3" y="14.9" width=".9" height=".9" fill="#ffffff" opacity=".8"/><rect x="27.8" y="34.7" width=".9" height=".9" fill="#ffffff" opacity=".8"/><rect x="25.1" y="20.1" width=".9" height=".9" fill="#ffffff" opacity=".8"/><rect x="43.0" y="3.2" width=".9" height=".9" fill="#ffffff" opacity=".8"/><rect x="36.1" y="24.7" width=".9" height=".9" fill="#ffffff" opacity=".8"/><rect x="25.8" y="15.2" width=".9" height=".9" fill="#ffffff" opacity=".8"/><rect x="39.1" y="18.1" width=".9" height=".9" fill="#ffffff" opacity=".8"/><rect x="39.5" y="6.3" width=".9" height=".9" fill="#ffffff" opacity=".8"/><rect x="29.8" y="4.4" width=".9" height=".9" fill="#ffffff" opacity=".8"/><rect x="35.1" y="37.0" width=".9" height=".9" fill="#ffffff" opacity=".8"/><rect x="36.8" y="31.0" width=".9" height=".9" fill="#ffffff" opacity=".8"/><rect x="32.7" y="29.8" width=".9" height=".9" fill="#ffffff" opacity=".8"/><rect x="27.0" y="11.6" width=".9" height=".9" fill="#ffffff" opacity=".8"/><rect x="38.5" y="29.0" width=".9" height=".9" fill="#ffffff" opacity=".8"/><rect x="33.4" y="3.5" width=".9" height=".9" fill="#ffffff" opacity=".8"/><rect x="30.3" y="8.4" width=".9" height=".9" fill="#ffffff" opacity=".8"/><rect x="30.6" y="32.4" width=".9" height=".9" fill="#ffffff" opacity=".8"/><rect x="29.0" y="35.5" width=".9" height=".9" fill="#ffffff" opacity=".8"/><rect x="42.6" y="2.2" width=".9" height=".9" fill="#ffffff" opacity=".8"/><rect x="32.6" y="19.7" width=".9" height=".9" fill="#ffffff" opacity=".8"/><rect x="25.5" y="17.0" width=".9" height=".9" fill="#ffffff" opacity=".8"/><rect x="43.1" y="4.5" width=".9" height=".9" fill="#ffffff" opacity=".8"/><rect x="36.9" y="4.8" width=".9" height=".9" fill="#ffffff" opacity=".8"/><rect x="36.6" y="35.8" width=".9" height=".9" fill="#ffffff" opacity=".8"/><rect x="29.1" y="0.3" width=".9" height=".9" fill="#ffffff" opacity=".8"/><rect x="26.7" y="21.6" width=".9" height=".9" fill="#ffffff" opacity=".8"/><rect x="25.3" y="3.4" width=".9" height=".9" fill="#ffffff" opacity=".8"/><rect x="34.9" y="36.8" width=".9" height=".9" fill="#ffffff" opacity=".8"/><rect x="33.4" y="15.9" width=".9" height=".9" fill="#ffffff" opacity=".8"/><rect x="37.8" y="3.7" width=".9" height=".9" fill="#ffffff" opacity=".8"/><rect x="36.6" y="6.9" width=".9" height=".9" fill="#ffffff" opacity=".8"/><rect x="37.2" y="38.3" width=".9" height=".9" fill="#ffffff" opacity=".8"/><rect x="26.1" y="22.2" width=".9" height=".9" fill="#ffffff" opacity=".8"/><rect x="37.1" y="6.0" width=".9" height=".9" fill="#ffffff" opacity=".8"/><rect x="30.4" y="39.8" width=".9" height=".9" fill="#ffffff" opacity=".8"/><rect x="45.0" y="4.9" width=".9" height=".9" fill="#ffffff" opacity=".8"/><rect x="39.1" y="38.0" width=".9" height=".9" fill="#ffffff" opacity=".8"/><rect x="29.7" y="24.4" width=".9" height=".9" fill="#ffffff" opacity=".8"/><rect x="25.9" y="14.6" width=".9" height=".9" fill="#ffffff" opacity=".8"/><rect x="38.5" y="23.6" width=".9" height=".9" fill="#ffffff" opacity=".8"/><rect x="40.5" y="3.5" width=".9" height=".9" fill="#ffffff" opacity=".8"/><rect x="31.9" y="34.6" width=".9" height=".9" fill="#ffffff" opacity=".8"/><rect x="36.7" y="18.1" width=".9" height=".9" fill="#ffffff" opacity=".8"/><rect x="33.0" y="39.4" width=".9" height=".9" fill="#ffffff" opacity=".8"/><rect x="36.5" y="0.7" width=".9" height=".9" fill="#ffffff" opacity=".8"/><rect x="41.0" y="13.1" width=".9" height=".9" fill="#ffffff" opacity=".8"/><rect x="33.7" y="8.5" width=".9" height=".9" fill="#ffffff" opacity=".8"/><rect x="33.9" y="13.0" width=".9" height=".9" fill="#ffffff" opacity=".8"/><rect x="26.8" y="25.2" width=".9" height=".9" fill="#ffffff" opacity=".8"/><rect x="27.1" y="31.4" width=".9" height=".9" fill="#ffffff" opacity=".8"/><rect x="25.5" y="31.2" width=".9" height=".9" fill="#ffffff" opacity=".8"/><rect x="41.2" y="19.9" width=".9" height=".9" fill="#ffffff" opacity=".8"/><rect x="39.2" y="9.9" width=".9" height=".9" fill="#ffffff" opacity=".8"/><rect x="39.8" y="17.0" width=".9" height=".9" fill="#ffffff" opacity=".8"/><rect x="29.6" y="38.6" width=".9" height=".9" fill="#ffffff" opacity=".8"/><rect x="33.0" y="14.9" width=".9" height=".9" fill="#ffffff" opacity=".8"/><rect x="42.2" y="14.8" width=".9" height=".9" fill="#ffffff" opacity=".8"/><rect x="38.4" y="6.8" width=".9" height=".9" fill="#ffffff" opacity=".8"/><rect x="41.9" y="10.4" width=".9" height=".9" fill="#ffffff" opacity=".8"/><rect x="26.0" y="39.0" width=".9" height=".9" fill="#ffffff" opacity=".8"/><rect x="5.1" y="48.7" width=".8" height=".8" fill="#ffffff" opacity=".75"/><rect x="14.8" y="40.6" width=".8" height=".8" fill="#ffffff" opacity=".75"/><rect x="3.1" y="27.5" width=".8" height=".8" fill="#ffffff" opacity=".75"/><rect x="5.5" y="35.3" width=".8" height=".8" fill="#ffffff" opacity=".75"/><rect x="10.3" y="49.2" width=".8" height=".8" fill="#ffffff" opacity=".75"/><rect x="7.3" y="29.4" width=".8" height=".8" fill="#ffffff" opacity=".75"/><rect x="9.7" y="29.3" width=".8" height=".8" fill="#ffffff" opacity=".75"/><rect x="4.0" y="39.3" width=".8" height=".8" fill="#ffffff" opacity=".75"/><rect x="11.4" y="27.6" width=".8" height=".8" fill="#ffffff" opacity=".75"/><rect x="8.4" y="42.9" width=".8" height=".8" fill="#ffffff" opacity=".75"/><rect x="12.2" y="35.2" width=".8" height=".8" fill="#ffffff" opacity=".75"/><rect x="13.6" y="30.1" width=".8" height=".8" fill="#ffffff" opacity=".75"/><rect x="11.6" y="44.5" width=".8" height=".8" fill="#ffffff" opacity=".75"/><rect x="13.6" y="37.9" width=".8" height=".8" fill="#ffffff" opacity=".75"/><rect x="4.2" y="27.2" width=".8" height=".8" fill="#ffffff" opacity=".75"/><rect x="9.3" y="30.2" width=".8" height=".8" fill="#ffffff" opacity=".75"/><rect x="10.6" y="28.0" width=".8" height=".8" fill="#ffffff" opacity=".75"/><rect x="12.4" y="31.3" width=".8" height=".8" fill="#ffffff" opacity=".75"/><rect x="3.2" y="30.2" width=".8" height=".8" fill="#ffffff" opacity=".75"/><rect x="8.5" y="39.4" width=".8" height=".8" fill="#ffffff" opacity=".75"/><rect x="7.7" y="30.2" width=".8" height=".8" fill="#ffffff" opacity=".75"/><rect x="8.8" y="48.7" width=".8" height=".8" fill="#ffffff" opacity=".75"/><rect x="71.3" y="50.6" width=".8" height=".8" fill="#ffffff" opacity=".75"/><rect x="67.2" y="51.8" width=".8" height=".8" fill="#ffffff" opacity=".75"/><rect x="74.1" y="41.5" width=".8" height=".8" fill="#ffffff" opacity=".75"/><rect x="71.2" y="41.4" width=".8" height=".8" fill="#ffffff" opacity=".75"/><rect x="74.3" y="30.5" width=".8" height=".8" fill="#ffffff" opacity=".75"/><rect x="72.1" y="41.5" width=".8" height=".8" fill="#ffffff" opacity=".75"/><rect x="69.4" y="45.7" width=".8" height=".8" fill="#ffffff" opacity=".75"/><rect x="72.8" y="31.4" width=".8" height=".8" fill="#ffffff" opacity=".75"/><rect x="72.6" y="39.4" width=".8" height=".8" fill="#ffffff" opacity=".75"/><rect x="70.9" y="43.6" width=".8" height=".8" fill="#ffffff" opacity=".75"/><rect x="67.4" y="42.9" width=".8" height=".8" fill="#ffffff" opacity=".75"/><rect x="70.0" y="49.2" width=".8" height=".8" fill="#ffffff" opacity=".75"/><rect x="68.8" y="47.9" width=".8" height=".8" fill="#ffffff" opacity=".75"/><rect x="72.8" y="43.4" width=".8" height=".8" fill="#ffffff" opacity=".75"/><rect x="74.0" y="29.8" width=".8" height=".8" fill="#ffffff" opacity=".75"/><rect x="71.8" y="43.1" width=".8" height=".8" fill="#ffffff" opacity=".75"/><rect x="72.4" y="38.4" width=".8" height=".8" fill="#ffffff" opacity=".75"/><rect x="67.6" y="33.3" width=".8" height=".8" fill="#ffffff" opacity=".75"/><rect x="36.9" y="8.5" width="1" height="1" fill="#8a6050" opacity=".35"/><rect x="27.2" y="14.8" width="1" height="1" fill="#8a6050" opacity=".35"/><rect x="34.5" y="21.3" width="1" height="1" fill="#8a6050" opacity=".35"/><rect x="26.5" y="29.9" width="1" height="1" fill="#8a6050" opacity=".35"/><rect x="32.0" y="30.2" width="1" height="1" fill="#8a6050" opacity=".35"/><rect x="26.2" y="36.3" width="1" height="1" fill="#8a6050" opacity=".35"/><rect x="36.6" y="37.1" width="1" height="1" fill="#8a6050" opacity=".35"/><rect x="43.8" y="32.0" width="1" height="1" fill="#8a6050" opacity=".35"/><rect x="27.9" y="14.6" width="1" height="1" fill="#8a6050" opacity=".35"/><rect x="30.2" y="30.1" width="1" height="1" fill="#8a6050" opacity=".35"/><rect x="29.5" y="10.0" width="1" height="1" fill="#8a6050" opacity=".35"/><rect x="28.0" y="6.3" width="1" height="1" fill="#8a6050" opacity=".35"/><rect x="42.9" y="37.1" width="1" height="1" fill="#8a6050" opacity=".35"/><rect x="32.7" y="28.7" width="1" height="1" fill="#8a6050" opacity=".35"/><rect x="34.4" y="20.8" width="1" height="1" fill="#8a6050" opacity=".35"/><rect x="32.7" y="24.8" width="1" height="1" fill="#8a6050" opacity=".35"/><rect x="30.3" y="11.2" width="1" height="1" fill="#8a6050" opacity=".35"/><rect x="35.3" y="9.1" width="1" height="1" fill="#8a6050" opacity=".35"/><rect x="33.9" y="36.0" width="1" height="1" fill="#8a6050" opacity=".35"/><rect x="26.4" y="5.7" width="1" height="1" fill="#8a6050" opacity=".35"/><rect x="40.4" y="4.1" width="1" height="1" fill="#8a6050" opacity=".35"/><rect x="30.5" y="32.7" width="1" height="1" fill="#8a6050" opacity=".35"/><rect x="36.9" y="9.9" width="1" height="1" fill="#8a6050" opacity=".35"/><rect x="27.1" y="11.9" width="1" height="1" fill="#8a6050" opacity=".35"/><rect x="31.4" y="30.8" width="1" height="1" fill="#8a6050" opacity=".35"/><rect x="43.6" y="30.3" width="1" height="1" fill="#8a6050" opacity=".35"/><rect x="42.2" y="35.5" width="1" height="1" fill="#8a6050" opacity=".35"/><rect x="41.8" y="35.1" width="1" height="1" fill="#8a6050" opacity=".35"/><rect x="43.4" y="5.4" width="1" height="1" fill="#8a6050" opacity=".35"/><rect x="31.7" y="10.9" width="1" height="1" fill="#8a6050" opacity=".35"/><rect x="36.9" y="19.7" width="1" height="1" fill="#8a6050" opacity=".35"/><rect x="32.2" y="32.1" width="1" height="1" fill="#8a6050" opacity=".35"/><rect x="33.2" y="9.5" width="1" height="1" fill="#8a6050" opacity=".35"/><rect x="31.0" y="18.6" width="1" height="1" fill="#8a6050" opacity=".35"/><rect x="37.0" y="22.5" width="1" height="1" fill="#8a6050" opacity=".35"/><rect x="33.9" y="8.7" width="1" height="1" fill="#8a6050" opacity=".35"/><rect x="33.2" y="13.7" width="1" height="1" fill="#8a6050" opacity=".35"/><rect x="29.1" y="21.6" width="1" height="1" fill="#8a6050" opacity=".35"/><rect x="29.4" y="27.6" width="1" height="1" fill="#8a6050" opacity=".35"/><rect x="37.9" y="7.0" width="1" height="1" fill="#8a6050" opacity=".35"/><rect x="-6" y="69" width="112" height="40" fill="url(#p4f)"/><rect x="-6" y="69" width="112" height="4" fill="#2c2024" opacity=".55"/><rect x="38.9" y="84.0" width="2.7" height="1.1" fill="#a87830" opacity=".8"/><rect x="21.6" y="92.4" width="3.5" height="2.1" fill="#3a3a78" opacity=".8"/><rect x="37.8" y="92.2" width="3.4" height="2.2" fill="#3a3a78" opacity=".8"/><rect x="40.9" y="99.9" width="3.6" height="2.1" fill="#c89a3a" opacity=".8"/><rect x="84.0" y="85.7" width="2.2" height="2.2" fill="#3a3a78" opacity=".8"/><rect x="96.9" y="98.1" width="1.7" height="1.8" fill="#3a3a78" opacity=".8"/><rect x="73.7" y="91.6" width="2.1" height="1.4" fill="#d8a848" opacity=".8"/><rect x="95.6" y="97.5" width="3.6" height="1.0" fill="#2a2a60" opacity=".8"/><rect x="43.4" y="95.4" width="3.6" height="1.7" fill="#3a3a78" opacity=".8"/><rect x="53.1" y="93.4" width="2.6" height="1.3" fill="#a87830" opacity=".8"/><rect x="40.8" y="97.2" width="1.6" height="1.9" fill="#c89a3a" opacity=".8"/><rect x="42.4" y="92.2" width="3.3" height="1.2" fill="#a87830" opacity=".8"/><rect x="73.9" y="83.3" width="3.1" height="1.6" fill="#d8a848" opacity=".8"/><rect x="34.7" y="90.3" width="2.3" height="1.8" fill="#2a2a60" opacity=".8"/><rect x="92.3" y="83.9" width="3.3" height="1.4" fill="#c89a3a" opacity=".8"/><rect x="66.6" y="98.4" width="2.3" height="1.2" fill="#c89a3a" opacity=".8"/><rect x="56.7" y="82.8" width="3.7" height="2.3" fill="#c89a3a" opacity=".8"/><rect x="78.8" y="100.2" width="2.3" height="1.5" fill="#c89a3a" opacity=".8"/><rect x="32.2" y="94.4" width="3.2" height="1.1" fill="#2a2a60" opacity=".8"/><rect x="69.4" y="99.0" width="1.8" height="1.5" fill="#3a3a78" opacity=".8"/><rect x="96.9" y="88.3" width="2.4" height="1.6" fill="#c89a3a" opacity=".8"/><rect x="49.2" y="97.3" width="2.9" height="1.6" fill="#3a3a78" opacity=".8"/><rect x="36.6" y="99.4" width="1.6" height="1.1" fill="#c89a3a" opacity=".8"/><rect x="33.5" y="94.9" width="3.0" height="1.8" fill="#d8a848" opacity=".8"/><rect x="66.6" y="88.1" width="1.8" height="1.7" fill="#c89a3a" opacity=".8"/><rect x="81.9" y="89.8" width="2.7" height="1.3" fill="#d8a848" opacity=".8"/><rect x="52.8" y="82.7" width="2.6" height="1.9" fill="#a87830" opacity=".8"/><rect x="54.2" y="86.1" width="1.6" height="1.4" fill="#d8a848" opacity=".8"/><rect x="39.4" y="86.0" width="2.5" height="1.4" fill="#d8a848" opacity=".8"/><rect x="46.0" y="98.9" width="2.9" height="2.4" fill="#3a3a78" opacity=".8"/><rect x="52.2" y="99.1" width="2.7" height="1.1" fill="#c89a3a" opacity=".8"/><rect x="36.9" y="98.6" width="2.3" height="1.9" fill="#d8a848" opacity=".8"/><rect x="84.0" y="94.2" width="2.8" height="1.9" fill="#a87830" opacity=".8"/><rect x="74.9" y="87.1" width="3.9" height="1.1" fill="#a87830" opacity=".8"/><rect x="97.7" y="100.3" width="1.6" height="2.3" fill="#d8a848" opacity=".8"/><rect x="30.2" y="100.4" width="3.7" height="2.0" fill="#c89a3a" opacity=".8"/><rect x="57.2" y="91.0" width="3.8" height="1.3" fill="#a87830" opacity=".8"/><rect x="20.3" y="99.5" width="3.0" height="1.4" fill="#c89a3a" opacity=".8"/><rect x="51.7" y="96.6" width="3.7" height="1.8" fill="#a87830" opacity=".8"/><rect x="90.3" y="85.8" width="2.3" height="2.2" fill="#2a2a60" opacity=".8"/><rect x="81.9" y="91.0" width="2.6" height="1.1" fill="#2a2a60" opacity=".8"/><rect x="75.6" y="84.1" width="3.7" height="1.9" fill="#2a2a60" opacity=".8"/><rect x="31.1" y="88.9" width="3.8" height="1.4" fill="#2a2a60" opacity=".8"/><rect x="47.8" y="83.4" width="2.6" height="1.3" fill="#2a2a60" opacity=".8"/><rect x="98.1" y="89.4" width="3.6" height="1.6" fill="#a87830" opacity=".8"/><rect x="26.2" y="99.4" width="2.8" height="1.6" fill="#3a3a78" opacity=".8"/><path d="M0 74 L8 72 L12 78 L10 84 L0 84 Z" fill="#7c5230"/><path d="M14 76 L24 73 L29 78 L28 86 L18 88 L14 84 Z" fill="#a87c40"/><path d="M1 86 L10 83 L16 90 L20 92 L21 100 L8 104 L2 98 Z" fill="#b08444"/><path d="M3 88 L9 86 L14 92 L8 94 Z" fill="#c8a058"/><path d="M28 90 L40 84 L48 86 L47 100 L36 104 L28 98 Z" fill="#a87a3c"/><path d="M34 86 L46 82 L48 88 L40 92 Z" fill="#c09850"/><path d="M22 86 L34 84 L36 88 L26 92 Z" fill="#2c2038"/><rect x="28" y="90" width="1.2" height="8" fill="#1c1420"/><path d="M46 78 L54 76 L58 80 L56 86 L48 86 Z" fill="#a07a40"/><path d="M64 78 L70 75 L72 82 L66 85 Z" fill="#98703c"/><path d="M66 82 L72 80 L80 88 L80 100 L72 102 L66 94 Z" fill="#b8a8a4"/><path d="M66 82 L72 80 L74 90 L68 92 Z" fill="#d8ccc8"/><path d="M84 92 L96 88 L106 90 V106 H88 Z" fill="#c0b0a8"/><path d="M78 80 L88 76 L96 80 L90 86 Z" fill="#a8989c"/><path d="M76 88 L90 85 L96 89 L82 93 Z" fill="#4a2c24"/><rect x="84" y="85" width="1" height="4" fill="#ffe8a0"/><g fill="#1c1418" opacity=".85"><rect x="18" y="68" width="16" height="4"/><rect x="48" y="69" width="16" height="4"/><rect x="78" y="66" width="3" height="7"/><rect x="84" y="67" width="4" height="6"/><rect x="92" y="66" width="3" height="7"/></g></g><rect width="100" height="100" filter="url(#gr4)" opacity="0.08"/><rect width="100" height="100" filter="url(#gd4)" opacity="0.08"/></svg></td><td class="t">一星</td><td class="t">民宿</td><td class="t">酒店地址4</td><td class="t">联系电话4</td><td><div class="acts"><span class="act"><svg viewBox="0 0 10 10"><rect x="1.5" y="1.5" width="7" height="8"/><path d="M3.5 4 H6.5 M3.5 5.6 H6.5 M3.5 7.2 H6.5" stroke-width=".8"/></svg>详情</span><span class="act"><svg viewBox="0 0 10 10"><path d="M6.6 1 L8.4 2.8 L3.4 7.9 L1.3 8.4 L1.8 6.2 Z M5.2 9.5 H9.4"/></svg>修改</span><span class="act"><svg viewBox="0 0 10 10"><path d="M6.6 1 L8.4 2.8 L3.4 7.9 L1.3 8.4 L1.8 6.2 Z M5.2 9.5 H9.4"/></svg>查看评论</span><span class="act"><svg viewBox="0 0 10 10"><path d="M0.6 2.5 H9.4 M3.5 2.5 V0.9 H6.5 V2.5 M1.5 2.5 V9.5 H8.5 V2.5"/><path d="M3.5 4.4 V7.8 M6.5 4.4 V7.8" stroke-width=".9"/></svg>删除</span></div></td></tr>
      <tr><td><span class="ck"></span></td><td class="t">5</td><td class="t">酒店名称5</td><td><svg class="pic" viewBox="0 0 100 100"><defs><filter id="bl5" x="-10%" y="-10%" width="120%" height="120%"><feGaussianBlur stdDeviation="0.5"/></filter><filter id="gr5" x="0" y="0" width="100%" height="100%"><feTurbulence type="fractalNoise" baseFrequency=".55" numOctaves="3" seed="8"/><feColorMatrix type="matrix" values="0 0 0 0 .95  0 0 0 0 .95  0 0 0 0 .95  .9 .9 .9 0 -.95"/></filter><filter id="gd5" x="0" y="0" width="100%" height="100%"><feTurbulence type="fractalNoise" baseFrequency=".45" numOctaves="3" seed="16"/><feColorMatrix type="matrix" values="0 0 0 0 0  0 0 0 0 0  0 0 0 0 0  -.9 -.9 -.9 0 1.05"/></filter><linearGradient id="p5s" x1="0" y1="0" x2="0" y2="1"><stop offset="0" stop-color="#2a3ba0"/><stop offset=".6" stop-color="#26348c"/><stop offset="1" stop-color="#38387c"/></linearGradient><linearGradient id="p5t" x1="0" y1="0" x2="1" y2="0"><stop offset="0" stop-color="#2a4454"/><stop offset=".08" stop-color="#8a7a48"/><stop offset=".14" stop-color="#2a4a5a"/><stop offset=".6" stop-color="#33586a"/><stop offset="1" stop-color="#223a4a"/></linearGradient></defs><g filter="url(#bl5)"><rect x="-6" y="-6" width="112" height="112" fill="url(#p5s)"/><ellipse cx="28" cy="6" rx="18" ry="6" fill="#3c4cb4" opacity=".7"/><ellipse cx="78" cy="14" rx="20" ry="7" fill="#2c3c98" opacity=".7"/><ellipse cx="20" cy="34" rx="22" ry="8" fill="#24328a" opacity=".7"/><ellipse cx="84" cy="40" rx="18" ry="7" fill="#33429f" opacity=".6"/><ellipse cx="60" cy="2" rx="14" ry="4" fill="#3646aa" opacity=".6"/><path d="M41 106 V20 L48 10 L61.5 18.5 V106 Z" fill="url(#p5t)"/><path d="M41 20 L47.6 9.6 L62 18 L61.4 21.4 L60 20 L48 13 L43 20.4 Z" fill="#eab23e"/><path d="M56.4 19 L59.8 21 V26 L56.4 24 Z" fill="#d09a38"/><rect x="47.6" y="7.5" width=".8" height="3" fill="#c8c8d8"/><rect x="49" y="22" width="1.2" height="1.6" fill="#d8b868" opacity=".6"/><rect x="51" y="24" width="1.2" height="1.6" fill="#d8b868" opacity=".6"/><rect x="54" y="28" width="1.2" height="1.6" fill="#d8b868" opacity=".6"/><rect x="50" y="32" width="1.2" height="1.6" fill="#d8b868" opacity=".6"/><rect x="52" y="36" width="1.2" height="1.6" fill="#d8b868" opacity=".6"/><rect x="56" y="34" width="1.2" height="1.6" fill="#d8b868" opacity=".6"/><rect x="49" y="40" width="1.2" height="1.6" fill="#d8b868" opacity=".6"/><rect x="53" y="44" width="1.2" height="1.6" fill="#d8b868" opacity=".6"/><rect x="51" y="50" width="1.2" height="1.6" fill="#d8b868" opacity=".6"/><rect x="55" y="52" width="1.2" height="1.6" fill="#d8b868" opacity=".6"/><rect x="49" y="56" width="1.2" height="1.6" fill="#d8b868" opacity=".6"/><rect x="53" y="60" width="1.2" height="1.6" fill="#d8b868" opacity=".6"/><rect x="57" y="58" width="1.2" height="1.6" fill="#d8b868" opacity=".6"/><rect x="50" y="66" width="1.2" height="1.6" fill="#d8b868" opacity=".6"/><rect x="54" y="70" width="1.2" height="1.6" fill="#d8b868" opacity=".6"/><rect x="48" y="46" width="1.2" height="1.6" fill="#d8b868" opacity=".6"/><rect x="57" y="46" width="1.2" height="1.6" fill="#d8b868" opacity=".6"/><rect x="52" y="76" width="1.2" height="1.6" fill="#d8b868" opacity=".6"/><rect x="56" y="80" width="1.2" height="1.6" fill="#d8b868" opacity=".6"/><rect x="49" y="84" width="1.2" height="1.6" fill="#d8b868" opacity=".6"/><g stroke="#1c3440" stroke-width=".5" opacity=".6"><path d="M47 14 V106 M50 16 V106 M53 18 V106 M56 20 V106"/></g></g><rect width="100" height="100" filter="url(#gr5)" opacity="0.04"/><rect width="100" height="100" filter="url(#gd5)" opacity="0.04"/></svg></td><td class="t">一星</td><td class="t">民宿</td><td class="t">酒店地址5</td><td class="t">联系电话5</td><td><div class="acts"><span class="act"><svg viewBox="0 0 10 10"><rect x="1.5" y="1.5" width="7" height="8"/><path d="M3.5 4 H6.5 M3.5 5.6 H6.5 M3.5 7.2 H6.5" stroke-width=".8"/></svg>详情</span><span class="act"><svg viewBox="0 0 10 10"><path d="M6.6 1 L8.4 2.8 L3.4 7.9 L1.3 8.4 L1.8 6.2 Z M5.2 9.5 H9.4"/></svg>修改</span><span class="act"><svg viewBox="0 0 10 10"><path d="M6.6 1 L8.4 2.8 L3.4 7.9 L1.3 8.4 L1.8 6.2 Z M5.2 9.5 H9.4"/></svg>查看评论</span><span class="act"><svg viewBox="0 0 10 10"><path d="M0.6 2.5 H9.4 M3.5 2.5 V0.9 H6.5 V2.5 M1.5 2.5 V9.5 H8.5 V2.5"/><path d="M3.5 4.4 V7.8 M6.5 4.4 V7.8" stroke-width=".9"/></svg>删除</span></div></td></tr>
    </table>
  </section>
</main>
<div class="sbar"><div class="thumb"></div><div class="arrow"></div></div>
</body>
</html>
